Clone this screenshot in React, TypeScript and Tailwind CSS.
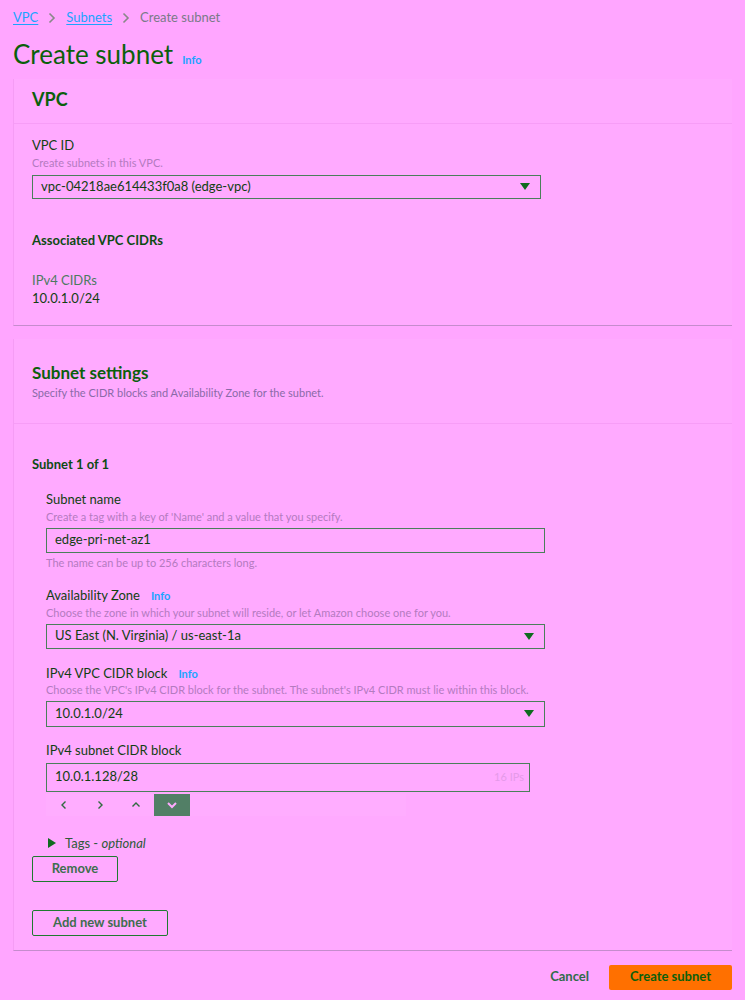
import React from "react";

const font = { fontFamily: "Lato, 'Noto Sans', sans-serif" };

function Info({ className = "" }: { className?: string }) {
  return <span className={"text-[11px] font-bold text-[#1aa3ff] " + className}>Info</span>;
}

function Caret() {
  return (
    <svg width="10" height="7" viewBox="0 0 10 7" className="shrink-0">
      <polygon points="0,0 10,0 5,7" fill="#0f6b1f" />
    </svg>
  );
}

function Select({ value, width, h = "h-[25px]" }: { value: string; width: string; h?: string }) {
  return (
    <div className={"flex items-center justify-between border border-[#4a7f5a] pl-[8px] pr-[10px] text-[13px] text-[#123f12] " + width + " " + h}>
      <span>{value}</span>
      <Caret />
    </div>
  );
}

const label = "text-[13px] leading-[20px] text-[#123f12]";
const desc = "text-[11px] leading-[16px] text-[#b47bbf]";

export default function App() {
  return (
    <div className="min-h-[1000px] w-[745px] bg-[#ffa6ff] text-[#0d4a12]" style={font}>
      {/* breadcrumb */}
      <div className="flex items-center gap-[10px] pl-[13px] pt-[8px] text-[13px]">
        <span className="text-[#1aa3ff] underline underline-offset-2">VPC</span>
        <svg width="8" height="12" viewBox="0 0 8 12"><path d="M1.5 1.5 L6 6 L1.5 10.5" stroke="#888" strokeWidth="1.6" fill="none" /></svg>
        <span className="text-[#1aa3ff] underline underline-offset-2">Subnets</span>
        <svg width="8" height="12" viewBox="0 0 8 12"><path d="M1.5 1.5 L6 6 L1.5 10.5" stroke="#888" strokeWidth="1.6" fill="none" /></svg>
        <span className="text-[#7a7a88]">Create subnet</span>
      </div>
      {/* title */}
      <div className="mt-[10px] flex items-baseline gap-[9px] pl-[13px]">
        <h1 className="text-[26px] leading-[32px] text-[#0b5f0b]">Create subnet</h1>
        <Info />
      </div>

      {/* VPC card */}
      <div className="ml-[13px] mr-[13px] mt-[9px] border-b-[1.5px] border-l border-b-[#c58ccd] border-l-[#f59cf5] bg-[#ffaaff]">
        <div className="border-b border-[#f79df7] px-[18px] pb-[12px] pt-[8px]">
          <h2 className="text-[18px] font-bold leading-[24px] text-[#0b5f0b]">VPC</h2>
        </div>
        <div className="px-[18px] pb-[18px] pt-[11px]">
          <div className={label}>VPC ID</div>
          <div className={desc}>Create subnets in this VPC.</div>
          <div className="mt-[4px]">
            <Select value="vpc-04218ae614433f0a8 (edge-vpc)" width="w-[509px]" h="h-[24px]" />
          </div>
          <div className="mt-[31px] text-[13px] font-bold leading-[20px] text-[#0d4a12]">Associated VPC CIDRs</div>
          <div className="mt-[21px] text-[13px] leading-[18px] text-[#4d7a5f]">IPv4 CIDRs</div>
          <div className="text-[13px] leading-[18px] text-[#123f12]">10.0.1.0/24</div>
        </div>
      </div>

      {/* Subnet settings card */}
      <div className="ml-[13px] mr-[13px] mt-[13px] border-b-[1.5px] border-l border-b-[#c58ccd] border-l-[#f59cf5] bg-[#ffaaff]">
        <div className="border-b border-[#f79df7] px-[18px] pb-[22px] pt-[22px]">
          <h2 className="text-[17px] font-bold leading-[24px] text-[#0b5f0b]">Subnet settings</h2>
          <div className="text-[11px] leading-[16px] text-[#8a6aa8]">Specify the CIDR blocks and Availability Zone for the subnet.</div>
        </div>
        <div className="px-[18px] pb-[14px] pt-[31px]">
          <div className="text-[13px] font-bold leading-[18px] text-[#0d4a12]">Subnet 1 of 1</div>
          <div className="pl-[14px] pt-[16px]">
            <div className={label}>Subnet name</div>
            <div className={desc}>Create a tag with a key of 'Name' and a value that you specify.</div>
            <div className="mt-[3px] flex h-[25px] w-[499px] items-center border border-[#4a7f5a] pl-[8px] text-[13px] text-[#123f12]">edge-pri-net-az1</div>
            <div className={"mt-[2px] " + desc}>The name can be up to 256 characters long.</div>

            <div className="mt-[14px] flex items-baseline gap-[11px]">
              <span className={label}>Availability Zone</span>
              <Info />
            </div>
            <div className={desc}>Choose the zone in which your subnet will reside, or let Amazon choose one for you.</div>
            <div className="mt-[3px]">
              <Select value="US East (N. Virginia) / us-east-1a" width="w-[499px]" />
            </div>

            <div className="mt-[14px] flex items-baseline gap-[11px]">
              <span className={label}>IPv4 VPC CIDR block</span>
              <Info />
            </div>
            <div className="text-[11px] leading-[14px] text-[#b47bbf]">Choose the VPC's IPv4 CIDR block for the subnet. The subnet's IPv4 CIDR must lie within this block.</div>
            <div className="mt-[4px]">
              <Select value="10.0.1.0/24" width="w-[499px]" h="h-[26px]" />
            </div>

            <div className={"mt-[13px] " + label}>IPv4 subnet CIDR block</div>
            <div className="mt-[3px] flex h-[29px] w-[484px] items-center justify-between border border-[#4a7f5a] pl-[8px] pr-[5px] text-[13px] text-[#123f12]">
              <span>10.0.1.128/28</span>
              <span className="text-[11px] text-[#e59ae9]">16 IPs</span>
            </div>
            <div className="mt-[2px] flex h-[22px] w-[360px] items-center bg-[#ffadff]">
              <div className="flex h-full w-[36px] items-center justify-center">
                <svg width="8" height="10" viewBox="0 0 8 10"><path d="M5.5 1.5 L2 5 L5.5 8.5" stroke="#2f6b3f" strokeWidth="1.4" fill="none" /></svg>
              </div>
              <div className="flex h-full w-[36px] items-center justify-center">
                <svg width="8" height="10" viewBox="0 0 8 10"><path d="M2.5 1.5 L6 5 L2.5 8.5" stroke="#2f6b3f" strokeWidth="1.4" fill="none" /></svg>
              </div>
              <div className="flex h-full w-[36px] items-center justify-center">
                <svg width="10" height="8" viewBox="0 0 10 8"><path d="M1.5 5.5 L5 2 L8.5 5.5" stroke="#2f6b3f" strokeWidth="1.4" fill="none" /></svg>
              </div>
              <div className="flex h-full w-[36px] items-center justify-center bg-[#527f66]">
                <svg width="12" height="8" viewBox="0 0 12 8"><path d="M2 2 L6 6 L10 2" stroke="#ffaaff" strokeWidth="2" fill="none" /></svg>
              </div>
            </div>

            <div className="mt-[17px] flex items-center gap-[9px] pl-[2px] text-[13px] leading-[20px] text-[#2f5a3a]">
              <svg width="8" height="10" viewBox="0 0 8 10"><polygon points="0,0 8,5 0,10" fill="#0f6b1f" /></svg>
              <span>Tags - <i>optional</i></span>
            </div>
          </div>
          <button className="mt-[3px] flex h-[26px] w-[86px] items-center justify-center rounded-[2px] border border-[#1f7a2f] text-[13px] font-bold text-[#3e6e4e]">Remove</button>
          <button className="mt-[28px] flex h-[26px] w-[136px] items-center justify-center rounded-[2px] border border-[#1f7a2f] text-[13px] font-bold text-[#3e6e4e]">Add new subnet</button>
        </div>
      </div>

      {/* footer */}
      <div className="mr-[13px] mt-[14px] flex items-center justify-end gap-[20px]">
        <span className="text-[13px] font-bold text-[#2f6b4a]">Cancel</span>
        <button className="flex h-[25px] w-[123px] items-center justify-center rounded-[2px] bg-[#ff7000] text-[13px] font-bold text-[#0b5f0b]">Create subnet</button>
      </div>
    </div>
  );
}
